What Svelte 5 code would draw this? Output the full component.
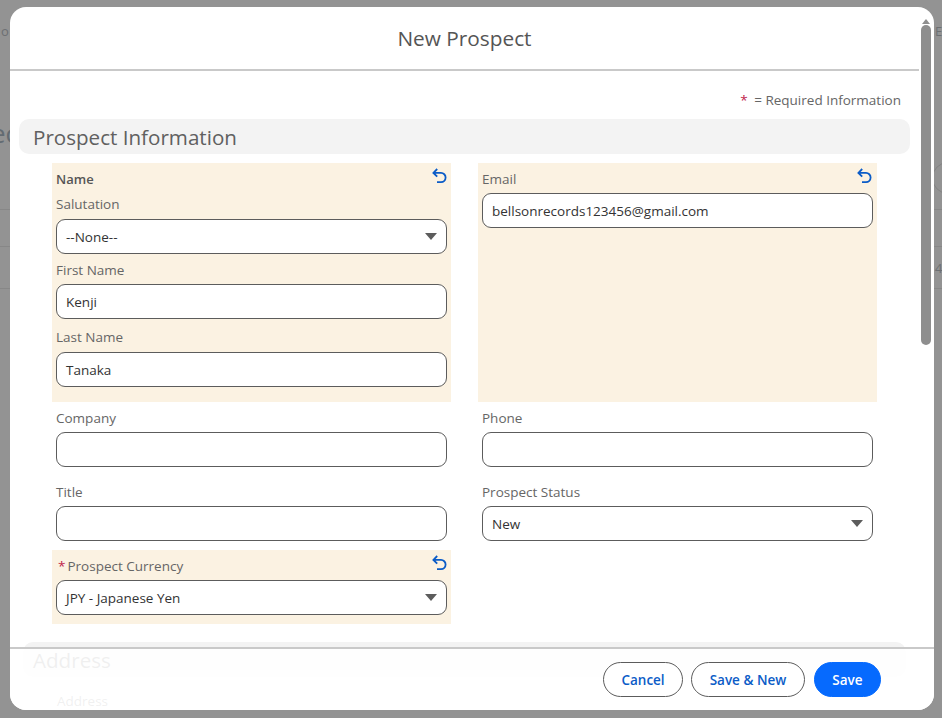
<script lang="ts">
    const undoPath = "M5.2 1 1.4 4.9 5.2 8.6M1.8 4.9h7.2a4.6 4.6 0 0 1 0 9.2H5";
</script>

{#snippet undo()}
    <svg class="undo" width="15" height="16" viewBox="0 0 15 16" aria-hidden="true">
        <path d={undoPath} />
    </svg>
{/snippet}

{#snippet caret()}
    <svg class="caret" width="12" height="7" viewBox="0 0 12 7" aria-hidden="true">
        <path d="M0 0h12L6 7z" />
    </svg>
{/snippet}

<div class="page">
    <div class="backdrop" aria-hidden="true">
        <span class="bg-o">o</span>
        <span class="bg-ec">ec</span>
        <span class="bg-e">E</span>
        <span class="bg-four">4</span>
        <i class="bg-circle"></i>
        <i class="bg-line l1"></i>
        <i class="bg-line l2"></i>
        <i class="bg-line l3"></i>
    </div>

    <div class="modal">
        <header class="head">New Prospect</header>

        <div class="content">
            <div class="required"><span class="star">*</span> = Required Information</div>
            <h2 class="section">Prospect Information</h2>

            <div class="grid">
                <div class="changed name-block">
                    {@render undo()}
                    <div class="name-title">Name</div>
                    <div class="lbl">Salutation</div>
                    <div class="box select">--None--{@render caret()}</div>
                    <div class="lbl first">First Name</div>
                    <div class="box">Kenji</div>
                    <div class="lbl last">Last Name</div>
                    <div class="box">Tanaka</div>
                </div>

                <div class="changed email-block">
                    {@render undo()}
                    <div class="lbl">Email</div>
                    <div class="box">bellsonrecords123456@gmail.com</div>
                </div>

                <div class="plain top-row">
                    <div class="lbl">Company</div>
                    <div class="box"></div>
                </div>
                <div class="plain top-row">
                    <div class="lbl">Phone</div>
                    <div class="box"></div>
                </div>

                <div class="plain">
                    <div class="lbl">Title</div>
                    <div class="box"></div>
                </div>
                <div class="plain">
                    <div class="lbl">Prospect Status</div>
                    <div class="box select">New{@render caret()}</div>
                </div>

                <div class="changed currency-block">
                    {@render undo()}
                    <div class="lbl"><span class="star">*</span>Prospect Currency</div>
                    <div class="box select">JPY - Japanese Yen{@render caret()}</div>
                </div>
            </div>

            <h2 class="section address">Address</h2>
            <div class="lbl address-lbl">Address</div>
        </div>

        <div class="scrollbar">
            <svg class="arrow" width="8" height="5" viewBox="0 0 8 5" aria-hidden="true"><path d="M4 0l4 5H0z" /></svg>
            <div class="thumb"></div>
        </div>

        <footer class="foot">
            <button class="btn">Cancel</button>
            <button class="btn">Save &amp; New</button>
            <button class="btn primary">Save</button>
        </footer>
    </div>
</div>

<style>
    :global(body) {
        margin: 0;
        background: #939393;
    }

    .page {
        position: relative;
        box-sizing: border-box;
        height: 718px;
        overflow: hidden;
        padding: 7px 8px 8px 10px;
        font-family: "Open Sans", "Noto Sans", sans-serif;
        color: #5c5c5c;
    }

    .backdrop span {
        position: absolute;
        color: #6c6f72;
        font-size: 13px;
        line-height: 18px;
    }

    .bg-o { left: 1px; top: 22px; }
    .bg-ec { left: -9px; top: 120px; font-size: 26px !important; line-height: 26px !important; color: #636b72 !important; }
    .bg-e { left: 935px; top: 22px; }
    .bg-four { left: 935px; top: 259px; }

    .bg-circle {
        position: absolute;
        left: 932px;
        top: 162px;
        width: 32px;
        height: 32px;
        box-sizing: border-box;
        border: 1px solid #838383;
        border-radius: 50%;
    }

    .bg-line {
        position: absolute;
        left: 0;
        right: 0;
        height: 1px;
        background: #878787;
    }

    .l1 { top: 209px; }
    .l2 { top: 246px; }
    .l3 { top: 288px; }

    .modal {
        position: relative;
        height: 703px;
        box-sizing: border-box;
        background: #fff;
        border-radius: 16px;
        overflow: hidden;
    }

    .head {
        height: 62px;
        margin-right: 15px;
        border-bottom: 2px solid #c9c9c9;
        display: flex;
        align-items: center;
        justify-content: center;
        font-size: 20.8px;
        color: #555;
    }

    .content {
        padding: 0 24px 0 9px;
    }

    .required {
        height: 48px;
        display: flex;
        align-items: center;
        justify-content: flex-end;
        padding: 10px 9px 0 0;
        box-sizing: border-box;
        font-size: 13.5px;
        white-space: pre;
        color: #666;
    }

    .star { color: #c0234a; margin-right: 3px; }

    .section {
        margin: 0;
        height: 35px;
        display: flex;
        align-items: center;
        padding-left: 14px;
        border-radius: 10px;
        background: #f3f3f3;
        font-size: 20.6px;
        font-weight: 400;
        color: #606060;
    }

    .grid {
        display: grid;
        grid-template-columns: 399px 399px;
        column-gap: 27px;
        margin: 9px 0 0 33px;
    }

    .changed {
        position: relative;
        background: #fbf2e2;
        padding: 0 4px;
        box-sizing: border-box;
    }

    .plain {
        padding: 0 4px 9px;
    }

    .top-row { margin-bottom: 5px; }

    .name-block, .email-block { height: 239px; margin-bottom: 5px; }
    .email-block { padding-top: 5px; }
    .currency-block { height: 74px; padding-top: 5px; }

    .undo {
        position: absolute;
        top: 5px;
        right: 4px;
        fill: none;
        stroke: #0b5cc7;
        stroke-width: 1.8;
    }

    .email-block .undo { right: 5px; }

    .name-title {
        font-size: 13px;
        font-weight: 600;
        line-height: 18px;
        padding-top: 7px;
        color: #555;
    }

    .lbl {
        font-size: 13.5px;
        line-height: 22px;
        margin-bottom: 3px;
        color: #666;
    }

    .lbl .star { margin: 0 2px; }

    .name-block .lbl { line-height: 25px; margin: 4px 0 2px; }
    .name-block .lbl.first { margin-bottom: 1px; }
    .name-block .lbl.last { margin-top: 6px; }

    .box {
        position: relative;
        height: 35px;
        box-sizing: border-box;
        display: flex;
        align-items: center;
        padding: 0 9px;
        background: #fff;
        border: 1px solid #5c5c5c;
        border-radius: 9px;
        font-size: 13.5px;
        color: #333;
    }

    .caret {
        position: absolute;
        right: 9px;
        top: 13px;
        fill: #5c5c5c;
    }

    .address {
        margin: 18px 4px 0;
        padding-left: 10px;
    }

    .address-lbl {
        margin: 13px 0 0 38px;
    }

    .scrollbar {
        position: absolute;
        top: 18px;
        right: 3px;
        width: 10px;
    }

    .arrow {
        position: absolute;
        top: -6px;
        left: 1px;
        fill: #8e8e8e;
    }

    .thumb {
        height: 320px;
        background: #8e8e8e;
        border-radius: 5px;
    }

    .foot {
        position: absolute;
        left: 0;
        right: 0;
        bottom: 0;
        height: 63px;
        box-sizing: border-box;
        border-top: 2px solid #c9c9c9;
        background: rgba(255, 255, 255, .9);
        display: flex;
        justify-content: flex-end;
        align-items: flex-start;
        gap: 8px;
        padding: 13px 53px 0 0;
    }

    .btn {
        height: 35px;
        padding: 0 17.5px;
        border: 1px solid #5c5c5c;
        border-radius: 18px;
        background: #fff;
        color: #0b5cc7;
        font-family: inherit;
        font-size: 13.5px;
        font-weight: 600;
    }

    .btn.primary {
        background: #066afe;
        border-color: #066afe;
        color: #fff;
        margin-left: 1px;
    }
</style>
